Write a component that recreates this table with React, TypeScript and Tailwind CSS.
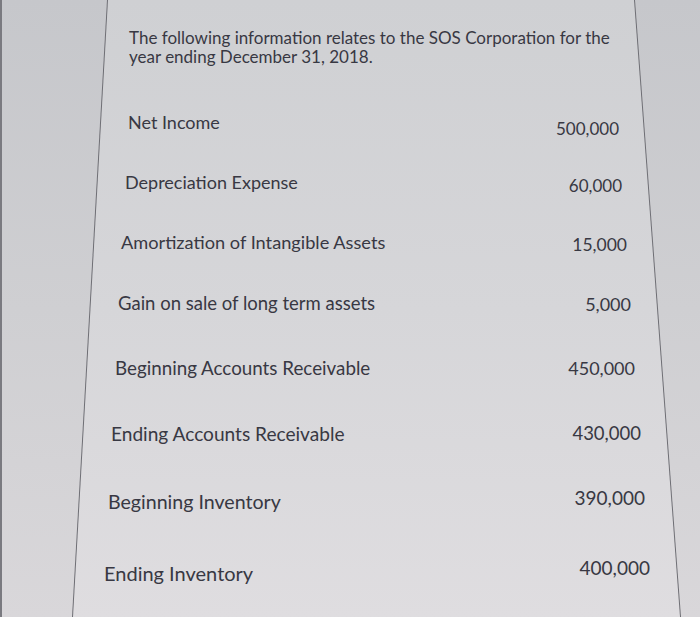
import React from "react";

const rows = [
  { label: "Net Income", value: "500,000", row: "h-[60px] pl-[128px] pr-[81px] text-[17px] leading-[20px]", lm: "mt-[12px] text-[18px]", vm: "mt-[19px]" },
  { label: "Depreciation Expense", value: "60,000", row: "h-[60px] pl-[125px] pr-[78px] text-[17px] leading-[20px]", lm: "mt-[12px] text-[18px]", vm: "mt-[16px]" },
  { label: "Amortization of Intangible Assets", value: "15,000", row: "h-[60px] pl-[121px] pr-[73px] text-[17.5px] leading-[21px]", lm: "mt-[12px] text-[18.2px]", vm: "mt-[14px]" },
  { label: "Gain on sale of long term assets", value: "5,000", row: "h-[65px] pl-[118px] pr-[69px] text-[18px] leading-[22px]", lm: "mt-[12px] text-[18.5px]", vm: "mt-[13px]" },
  { label: "Beginning Accounts Receivable", value: "450,000", row: "h-[66px] pl-[115px] pr-[65px] text-[18px] leading-[22px]", lm: "mt-[12px] text-[18.8px]", vm: "mt-[12px]" },
  { label: "Ending Accounts Receivable", value: "430,000", row: "h-[67px] pl-[111px] pr-[59px] text-[18.5px] leading-[22px]", lm: "mt-[12px] text-[19.1px]", vm: "mt-[11px]" },
  { label: "Beginning Inventory", value: "390,000", row: "h-[72px] pl-[108px] pr-[55px] text-[19px] leading-[23px]", lm: "mt-[12px] text-[19.6px]", vm: "mt-[8px]" },
  { label: "Ending Inventory", value: "400,000", row: "h-[67px] pl-[104px] pr-[50px] text-[19px] leading-[23px]", lm: "mt-[12px] text-[20px]", vm: "mt-[6px]" },
];

export default function App() {
  return (
    <div className="relative w-[700px] h-[617px] overflow-hidden bg-gradient-to-b from-[#c6c7cb] via-[#cfcfd2] to-[#d9d7da] shadow-[inset_2px_0_0_#7a7a80]">
      <div className="w-full h-full bg-[#6e6e74] [clip-path:polygon(107px_0,635px_0,681px_617px,72px_617px)]">
        <div className="w-full h-full bg-gradient-to-b from-[#cfd0d3] via-[#d6d6d9] to-[#dfdde0] [clip-path:polygon(108px_0,634px_0,680px_617px,73px_617px)] text-[#383843] font-['Lato',sans-serif]">
          <div className="h-[100px] pt-[28px] pl-[129px] text-[17px] leading-[19px]">
            The following information relates to the SOS Corporation for the
            <br />
            year ending December 31, 2018.
          </div>
          {rows.map((r) => (
            <div key={r.label} className={"flex justify-between items-start " + r.row}>
              <div className={r.lm}>{r.label}</div>
              <div className={r.vm}>{r.value}</div>
            </div>
          ))}
        </div>
      </div>
    </div>
  );
}
